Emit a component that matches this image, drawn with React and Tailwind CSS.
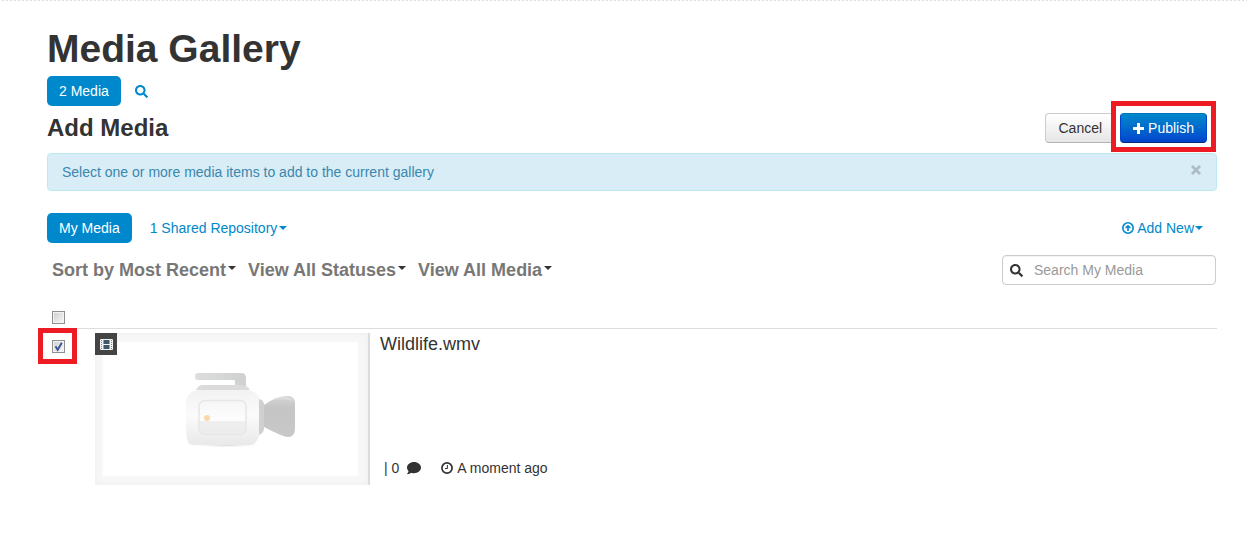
import { useState } from 'react';
import { FaSearch, FaComment } from 'react-icons/fa';

// ── Icons ─────────────────────────────────────────────────────────────────────

function PlusIcon({ className }) {
  return (
    <svg viewBox="0 0 11 11" className={className} fill="currentColor" aria-hidden="true">
      <path d="M4 .5Q4 0 4.500 0h2Q7 0 7 .5V4h3.500q.5 0 .5.500v2q0 .5-.5.500H7v3.500q0 .5-.5.500h-2Q4 11 4 10.500V7H.5Q0 7 0 6.500v-2Q0 4 .5 4H4Z" />
    </svg>
  );
}

function UploadIcon({ className }) {
  return (
    <svg viewBox="0 0 12 12" className={className} fill="none" stroke="currentColor" aria-hidden="true">
      <circle cx="6" cy="6" r="5.200" strokeWidth="1.600" />
      <path d="M6 2.700 3.100 5.600l.9.900 1.200-1.100V9h1.600V5.400L8 6.500l.9-.9Z" fill="currentColor" stroke="none" />
    </svg>
  );
}

function ClockIcon({ className }) {
  return (
    <svg viewBox="0 0 12 12" className={className} fill="none" stroke="currentColor" aria-hidden="true">
      <circle cx="6" cy="6" r="5.100" strokeWidth="1.700" />
      <path d="M6.400 3v3.500H4" strokeWidth="1" />
    </svg>
  );
}

function FilmIcon({ className }) {
  return (
    <svg viewBox="0 0 13 11" className={className} fill="none" aria-hidden="true">
      <rect width="13" height="11" rx="1" fill="#f2f2f2" />
      <path d="M1 1h1v1H1zM1 3h1v1H1zM1 5h1v1H1zM1 7h1v1H1zM1 9h1v1H1zM11 1h1v1h-1zM11 3h1v1h-1zM11 5h1v1h-1zM11 7h1v1h-1zM11 9h1v1h-1z" fill="#8a8a8a" />
      <path d="M3.500 1h6v4h-6zM3.500 6h6v4h-6z" fill="#3f5967" />
    </svg>
  );
}

function CloseIcon({ className }) {
  return (
    <svg viewBox="0 0 10 10" className={className} stroke="currentColor" strokeWidth="2.800" aria-hidden="true">
      <path d="m1 1 8 8M9 1 1 9" />
    </svg>
  );
}

function Caret({ className = '' }) {
  return (
    <span
      className={`inline-block h-0 w-0 border-x-4 border-t-4 border-x-transparent border-t-current ${className}`}
    />
  );
}

function CameraArt({ className }) {
  return (
    <svg viewBox="0 0 112 76" className={className} aria-hidden="true">
      <defs>
        <linearGradient id="body" x1="0" y1="0" x2="0" y2="1">
          <stop offset="0" stopColor="#f2f2f2" />
          <stop offset=".45" stopColor="#fbfbfb" />
          <stop offset="1" stopColor="#e9e9e9" />
        </linearGradient>
        <linearGradient id="lens" x1="0" y1="0" x2="0" y2="1">
          <stop offset="0" stopColor="#d4d4d4" />
          <stop offset=".3" stopColor="#c5c5c5" />
          <stop offset="1" stopColor="#c8c8c8" />
        </linearGradient>
        <linearGradient id="screen" x1="0" y1="0" x2="0" y2="1">
          <stop offset="0" stopColor="#f6f6f6" />
          <stop offset=".6" stopColor="#fdfdfd" />
          <stop offset=".62" stopColor="#eee" />
          <stop offset="1" stopColor="#ececec" />
        </linearGradient>
        <linearGradient id="handle" x1="0" y1="0" x2="1" y2="0">
          <stop offset="0" stopColor="#dcdddd" />
          <stop offset="1" stopColor="#cfd1d1" />
        </linearGradient>
        <radialGradient id="shadow">
          <stop offset="0" stopColor="#d2d2d2" />
          <stop offset="1" stopColor="#ffffff" stopOpacity="0" />
        </radialGradient>
      </defs>
      <ellipse cx="40" cy="73" rx="38" ry="3" fill="url(#shadow)" />
      <path d="M12 1h43q5 0 5 5v9H49V9q0-1-2-1H12Q9 8 9 4.500T12 1Z" fill="url(#handle)" />
      <path d="M10 18q2-5 7-5h38q6 0 9 5Z" fill="#dbdbdb" />
      <path d="M12 18h50q12 2 12 14v24q0 10-5 15-2 2-5 2H7q-4 0-5-3-2-5-2-14V32Q0 20 12 18Z" fill="url(#body)" />
      <rect x="13" y="28.500" width="47" height="34" rx="6" fill="url(#screen)" stroke="#e6e6e6" strokeWidth="1.500" />
      <circle cx="21" cy="46" r="3" fill="#fbd8aa" />
      <path d="M73 27q5 1 5 6v23q0 5-5 7Z" fill="#d0d0d0" />
      <path d="M78 33Q90 24 102 24q7 0 7 8v24q0 9-7 9-5 0-24-10Z" fill="url(#lens)" />
      <path d="M88 28q8-4 14-3 4 1 5 4-8-3-19-1Z" fill="#dcdcdc" />
    </svg>
  );
}

// ── Controls ──────────────────────────────────────────────────────────────────

function CheckBox({ label, checked, onChange }) {
  return (
    <label className="grid h-[13px] w-[13px]">
      <input
        type="checkbox"
        aria-label={label}
        checked={checked}
        onChange={onChange}
        className="peer col-start-1 row-start-1 h-[13px] w-[13px] appearance-none border border-[#8e8f8f] bg-linear-to-br from-[#cfcfcf] to-[#f8f8f8] shadow-[inset_0_0_0_1px_#f4f4f4]"
      />
      <svg
        viewBox="0 0 13 13"
        className="pointer-events-none invisible col-start-1 row-start-1 h-[13px] w-[13px] peer-checked:visible"
        aria-hidden="true"
      >
        <path d="m3.500 6.200 2.200 3.600L9.800 2.800" fill="none" stroke="#3d5598" strokeWidth="1.900" />
      </svg>
    </label>
  );
}

function SortMenu({ children }) {
  return (
    <button className="flex items-center gap-0.5 text-lg leading-5 font-bold text-[#777]">
      {children}
      <Caret className="mb-1 text-[#333]" />
    </button>
  );
}

// ── Page ──────────────────────────────────────────────────────────────────────

const filters = ['Sort by Most Recent', 'View All Statuses', 'View All Media'];

export default function App() {
  const [allSelected, setAllSelected] = useState(false);
  const [selected, setSelected] = useState(true);
  const [showHint, setShowHint] = useState(true);

  return (
    <div className="min-h-screen bg-white font-['Liberation_Sans',Arial,sans-serif] text-sm leading-5 text-[#333]">
      <div className="ml-0.5 h-px bg-[repeating-linear-gradient(90deg,#ddd_0_2px,transparent_2px_4px)]" />

      <main className="pt-7 pr-[30px] pb-12 pl-[47px]">
        <h1 className="text-[39px] leading-10 font-bold">Media Gallery</h1>

        <nav className="mt-[7px] flex items-center gap-[14px] text-[#08c]">
          <a href="#media" className="rounded-[5px] bg-[#08c] px-3 py-[5px] text-white">2 Media</a>
          <a href="#search" aria-label="Search gallery"><FaSearch className="h-[13px] w-[13px]" /></a>
        </nav>

        {/* Add media heading and actions */}
        <div className="mt-0.5 flex items-center justify-between pr-2.5">
          <h2 className="text-2xl leading-10 font-bold">Add Media</h2>
          <div className="flex gap-[5px]">
            <button className="rounded border border-[#ccc] border-b-[#b3b3b3] bg-linear-to-b from-white to-[#e6e6e6] px-3 py-1">
              Cancel
            </button>
            <div className="relative">
              <button className="flex items-center gap-1 rounded border border-[#04c] border-t-[#0074b8] border-b-[#002a80] bg-linear-to-b from-[#08c] to-[#04c] px-3 py-1 text-white">
                <PlusIcon className="h-[11px] w-[11px]" />
                Publish
              </button>
              <div className="pointer-events-none absolute -inset-x-[9px] -top-3 -bottom-[9px] border-5 border-[#ed1c24]" />
            </div>
          </div>
        </div>

        {showHint && (
          <div className="mt-[5px] flex items-start justify-between rounded border border-[#bce8f1] bg-[#d9edf7] py-2 pr-[15px] pl-[14px] text-[#3a87ad]">
            <p>Select one or more media items to add to the current gallery</p>
            <button aria-label="Dismiss" onClick={() => setShowHint(false)} className="mt-[3px] text-[#acbcc4]">
              <CloseIcon className="h-2.5 w-2.5" />
            </button>
          </div>
        )}

        {/* Repository tabs */}
        <div className="mt-[22px] flex items-center justify-between pr-[14px] text-[#08c]">
          <div className="flex items-center gap-[18px]">
            <a href="#mine" className="rounded-[5px] bg-[#08c] px-3 py-[5px] text-white">My Media</a>
            <button className="flex items-center gap-0.5">1 Shared Repository<Caret /></button>
          </div>
          <button className="flex items-center gap-[3px]">
            <UploadIcon className="h-3 w-3" />
            <span className="flex items-center gap-px">Add New<Caret /></span>
          </button>
        </div>

        {/* Filters */}
        <div className="mt-3 flex items-center justify-between pr-px">
          <div className="flex gap-3 pl-[5px]">
            {filters.map((name) => (
              <SortMenu key={name}>{name}</SortMenu>
            ))}
          </div>
          <label className="flex h-[30px] w-[214px] items-center gap-[11px] rounded border border-[#ccc] px-[7px] shadow-[inset_0_1px_1px_rgba(0,0,0,0.05)]">
            <FaSearch className="h-[13px] w-[13px] shrink-0" />
            <input
              type="text"
              aria-label="Search My Media"
              placeholder="Search My Media"
              className="min-w-0 flex-1 outline-none placeholder:text-[#999]"
            />
          </label>
        </div>

        {/* Media list */}
        <div className="mt-[26px] border-b border-[#ddd] pb-1 pl-[5px]">
          <CheckBox label="Select all" checked={allSelected} onChange={() => setAllSelected(!allSelected)} />
        </div>
        <div className="flex pt-1 pl-[5px]">
          <div className="relative mt-[7px] mr-[30px] self-start">
            <CheckBox label="Select Wildlife.wmv" checked={selected} onChange={() => setSelected(!selected)} />
            <div className="pointer-events-none absolute -top-3 -right-3 -bottom-[11px] -left-[14px] border-5 border-[#ed1c24]" />
          </div>

          <div className="relative flex h-[152px] w-[275px] border-r-2 border-[#dcdcdc] bg-[#f7f7f7] py-[9px] pr-2.5 pl-2 shadow-[inset_0_0_6px_#eee]">
            <div className="flex flex-1 items-center justify-center bg-white pt-0.5 pl-[22px] shadow-[0_0_2px_#fff]">
              <CameraArt className="h-[76px] w-28" />
            </div>
            <span className="absolute top-0 left-0 flex h-[22px] w-[22px] items-center justify-center bg-[#444]">
              <FilmIcon className="h-[11px] w-[13px]" />
            </span>
          </div>

          <div className="flex flex-col justify-between pb-[7px] pl-2.5">
            <h3 className="text-lg leading-[22px]">Wildlife.wmv</h3>
            <div className="flex items-center gap-5 pl-1">
              <span className="flex items-center gap-2">| 0 <FaComment className="h-[14px] w-[14px]" /></span>
              <span className="flex items-center gap-1"><ClockIcon className="h-3 w-3" />A moment ago</span>
            </div>
          </div>
        </div>
      </main>
    </div>
  );
}
